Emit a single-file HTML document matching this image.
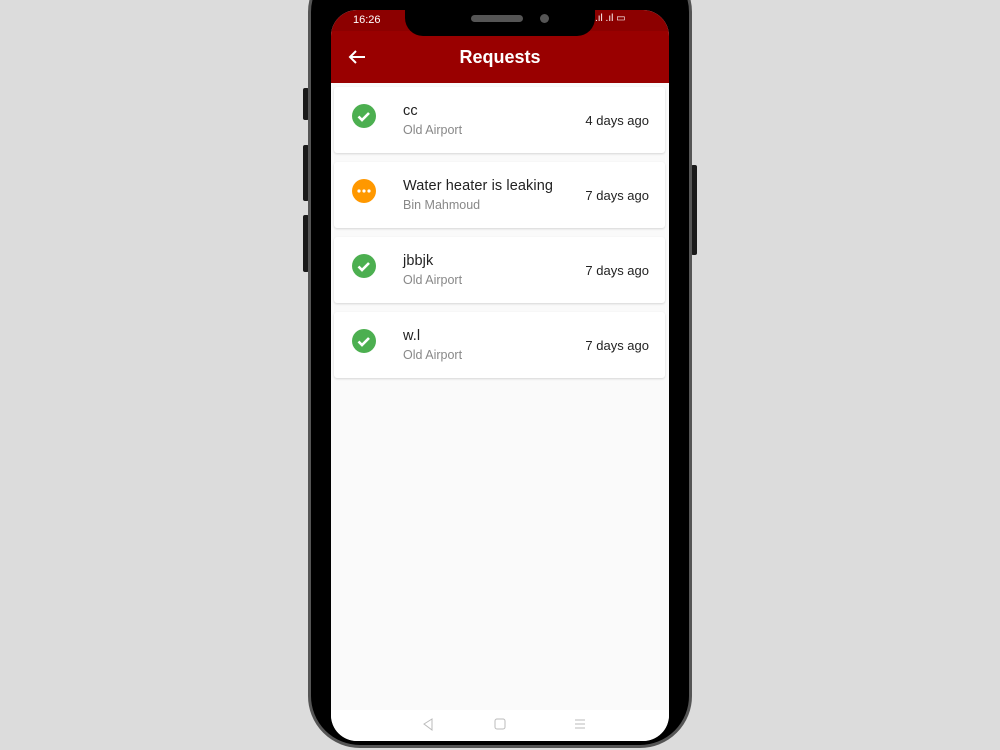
<!DOCTYPE html>
<html><head><style>
body{margin:0;width:1000px;height:750px;background:#dcdcdc;position:relative;overflow:hidden;font-family:"Liberation Sans",Roboto,sans-serif}
.btn{position:absolute;background:#1a1a1a;border-radius:2px}
.phone{position:absolute;left:308px;top:-40px;width:384px;height:788px;background:#000;border:3px solid #555;box-sizing:border-box;border-radius:52px}
.screen{position:absolute;left:331px;top:10px;width:338px;height:731px;background:#fafafa;border-radius:26px;overflow:hidden}
.status{position:absolute;left:0;top:0;width:338px;height:21px;background:#8c0000;color:#fff;font-size:11px}
.bar{position:absolute;left:0;top:21px;width:338px;height:52px;background:#990000;color:#fff}
.notch{position:absolute;left:405px;top:0;width:190px;height:36px;background:#000;border-radius:0 0 18px 18px}
.card{position:absolute;left:3px;width:331px;height:66px;background:#fff;border-radius:3px;box-shadow:0 1px 2px rgba(0,0,0,.15)}
.ic{position:absolute;left:18px;top:17px;width:24px;height:24px;border-radius:50%}
.t{position:absolute;left:69px;top:16px;font-size:14.5px;letter-spacing:0.1px;color:#222}
.s{position:absolute;left:69px;top:36px;font-size:12.5px;color:#888}
.d{position:absolute;right:16px;top:26px;font-size:13px;color:#222}
.nav{position:absolute;left:0;top:700px;width:338px;height:31px;background:#fff}
</style></head><body>
<div class="btn" style="left:303px;top:88px;width:6px;height:32px"></div>
<div class="btn" style="left:303px;top:145px;width:6px;height:56px"></div>
<div class="btn" style="left:303px;top:215px;width:6px;height:57px"></div>
<div class="btn" style="left:691px;top:165px;width:6px;height:90px"></div>
<div class="phone"></div>
<div class="screen">
<div class="status"><span style="position:absolute;left:22px;top:4px">16:26</span><span style="position:absolute;left:264px;top:3px;font-size:10px">.ıl .ıl ▭</span></div>
<div class="bar">
<svg style="position:absolute;left:17px;top:18px" width="18" height="16" viewBox="0 0 18 16"><path d="M17 8H2M8 2L2 8l6 6" stroke="#fff" stroke-width="2" fill="none"/></svg>
<div style="position:absolute;left:0;width:338px;top:16px;text-align:center;font-size:18px;font-weight:600">Requests</div>
</div>
<div class="card" style="top:77px"><div class="ic" style="background:#4caf50"><svg width="24" height="24"><path d="M6.5 12.5l3.5 3.5 7-7" stroke="#fff" stroke-width="2.6" fill="none"/></svg></div><div class="t">cc</div><div class="s">Old Airport</div><div class="d">4 days ago</div></div>
<div class="card" style="top:152px"><div class="ic" style="background:#ff9800"><svg width="24" height="24"><circle cx="7" cy="12" r="1.6" fill="#fff"/><circle cx="12" cy="12" r="1.6" fill="#fff"/><circle cx="17" cy="12" r="1.6" fill="#fff"/></svg></div><div class="t">Water heater is leaking</div><div class="s">Bin Mahmoud</div><div class="d">7 days ago</div></div>
<div class="card" style="top:227px"><div class="ic" style="background:#4caf50"><svg width="24" height="24"><path d="M6.5 12.5l3.5 3.5 7-7" stroke="#fff" stroke-width="2.6" fill="none"/></svg></div><div class="t">jbbjk</div><div class="s">Old Airport</div><div class="d">7 days ago</div></div>
<div class="card" style="top:302px"><div class="ic" style="background:#4caf50"><svg width="24" height="24"><path d="M6.5 12.5l3.5 3.5 7-7" stroke="#fff" stroke-width="2.6" fill="none"/></svg></div><div class="t">w.l</div><div class="s">Old Airport</div><div class="d">7 days ago</div></div>
<div class="nav"><svg width="338" height="31"><path d="M93 14l8-5v11z" stroke="#bbb" fill="none"/><rect x="164" y="9" width="10" height="10" rx="2" stroke="#bbb" fill="none"/><path d="M244 10h10M244 14h10M244 18h10" stroke="#bbb"/></svg></div>
</div>
<div class="notch"><div style="position:absolute;left:66px;top:15px;width:52px;height:7px;background:#555;border-radius:4px"></div><div style="position:absolute;left:135px;top:14px;width:9px;height:9px;background:#555;border-radius:50%"></div></div>
</body></html>
